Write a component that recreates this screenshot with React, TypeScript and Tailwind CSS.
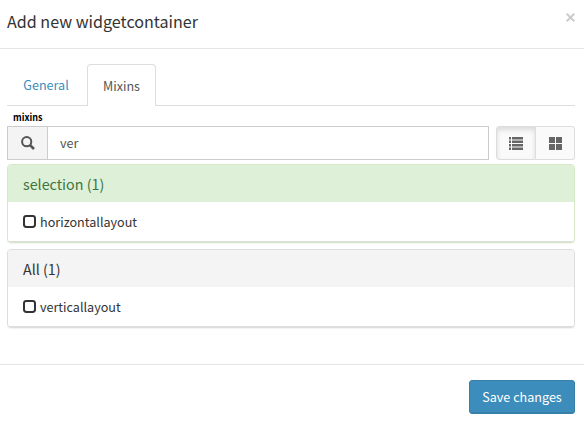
import React from "react";

function CheckboxIcon() {
  return (
    <svg className="mr-[4px] h-[13px] w-[13px] shrink-0" viewBox="0 0 13 13" fill="none">
      <rect x="1" y="1" width="11" height="11" rx="2.4" stroke="#333" strokeWidth="2" />
    </svg>
  );
}

function Panel({ title, item, success = false }: { title: string; item: string; success?: boolean }) {
  return (
    <section
      className={
        "h-[79px] overflow-hidden rounded-[4px] border bg-white " +
        (success
          ? "border-[#d6e9c6] shadow-[0_1px_1px_rgba(0,0,0,0.05)]"
          : "border-[#ddd] shadow-[0_1px_1px_rgba(0,0,0,0.05)]")
      }
    >
      <h4
        className={
          "flex h-[37px] items-center px-[15px] text-[14.3px] " +
          (success ? "bg-[#dff0d8] text-[#3c763d]" : "bg-[#f4f4f4] text-[#333]")
        }
      >
        {title}
      </h4>
      <div className="flex h-[40px] items-center border-b border-[#ddd] px-[15px] text-[12.6px] text-[#333]">
        <CheckboxIcon />
        <span>{item}</span>
      </div>
    </section>
  );
}

export default function App() {
  return (
    <div className="h-[425px] w-[584px] overflow-hidden bg-white font-['Noto_Sans_CJK_SC','Noto_Sans',sans-serif] text-[12.6px] leading-[20px] whitespace-nowrap text-[#333]">
      <header className="flex h-[49px] justify-between border-b border-[#e5e5e5] pr-[9px] pl-[7px]">
        <h1 className="pt-[8px] text-[16.1px] leading-[26px]">Add new widgetcontainer</h1>
        <button aria-label="Close" className="mt-[13px] h-[9px] w-[9px]">
          <svg viewBox="0 0 9 9" className="h-[9px] w-[9px]" stroke="#ccc" strokeWidth="2">
            <path d="M0.7 0.7L8.3 8.3M8.3 0.7L0.7 8.3" />
          </svg>
        </button>
      </header>

      <main className="h-[315px] px-[7px] pr-[9px] pt-[15px]">
        <nav className="flex h-[42px] border-b border-[#ddd]">
          <a className="mr-[2px] flex w-[78px] items-center justify-center text-[#3c8dbc]">General</a>
          <a className="flex h-[42px] w-[69px] items-center justify-center rounded-t-[4px] border border-b-0 border-[#ddd] bg-white text-[#555]">
            Mixins
          </a>
        </nav>
        <label className="block h-[20px] pl-[6px] text-[9px] leading-[24px] font-bold text-black">mixins</label>
        <div className="flex h-[34px]">
          <span className="flex w-[40px] items-center justify-center border border-r-0 border-[#ccc] bg-[#f4f4f4]">
            <svg className="h-[14px] w-[14px]" viewBox="0 0 14 14" fill="none" stroke="#555">
              <circle cx="5.7" cy="5.7" r="4.6" strokeWidth="2" />
              <path d="M9.1 9.1L13 13" strokeWidth="2.7" />
            </svg>
          </span>
          <div className="flex w-[442px] items-center border border-[#ccc] px-[12px] text-[#555]">ver</div>
          <div className="ml-[7px] flex w-[79px]">
            <button className="flex w-[40px] items-center justify-center rounded-l-[3px] border border-[#ddd] bg-[#fafafa] shadow-[inset_0_3px_5px_rgba(0,0,0,0.125)]">
              <svg className="h-[13px] w-[14px]" viewBox="0 0 14 13" fill="#666">
                <path d="M0 0h2v2.5H0zM3 0h11v2.5H3zM0 3.5h2V6H0zM3 3.5h11V6H3zM0 7h2v2.5H0zM3 7h11v2.5H3zM0 10.5h2V13H0zM3 10.5h11V13H3z" />
              </svg>
            </button>
            <button className="flex w-[39px] items-center justify-center rounded-r-[3px] border border-l-0 border-[#ddd] bg-[#fafafa]">
              <svg className="h-[13px] w-[13px]" viewBox="0 0 13 13" fill="#666">
                <path d="M0 0h6v6H0zM7 0h6v6H7zM0 7h6v6H0zM7 7h6v6H7z" />
              </svg>
            </button>
          </div>
        </div>
        <div className="mt-[4px] flex flex-col gap-[6px]">
          <Panel title="selection (1)" item="horizontallayout" success />
          <Panel title="All (1)" item="verticallayout" />
        </div>
      </main>

      <footer className="flex justify-end border-t border-[#e5e5e5] pt-[15px] pr-[9px]">
        <button className="flex h-[34px] w-[106px] items-center justify-center rounded-[3px] border border-[#367fa9] bg-[#3c8dbc] text-white shadow-[inset_0_-1px_0_rgba(0,0,0,0.09)]">
          Save changes
        </button>
      </footer>
    </div>
  );
}
